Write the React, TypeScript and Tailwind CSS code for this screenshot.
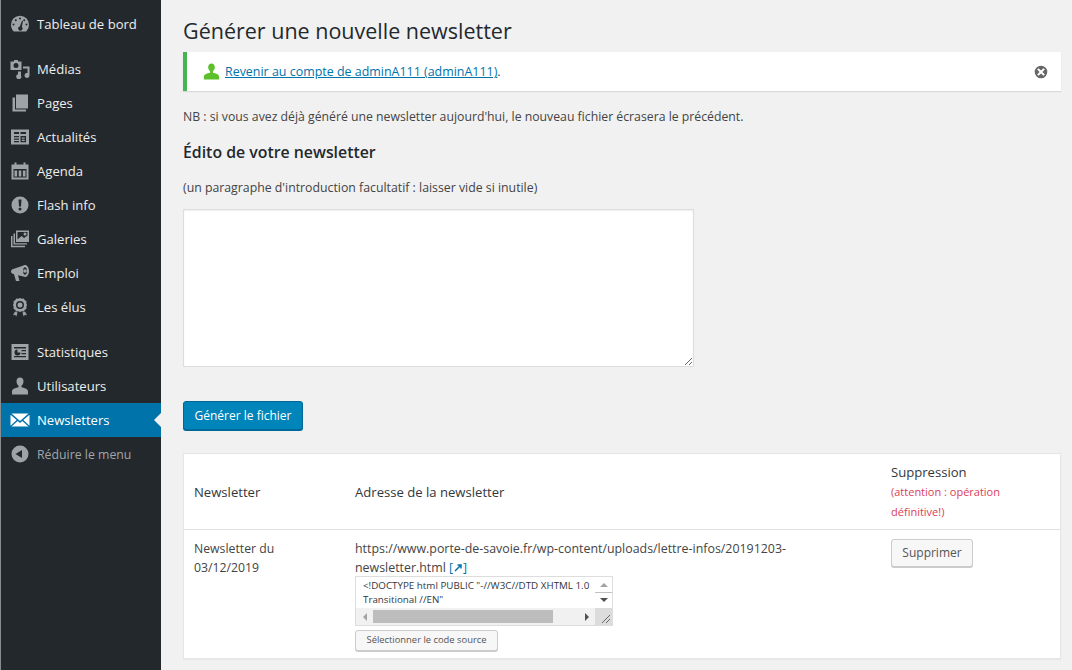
import { ReactNode } from "react";

const ic = "w-5 h-5 fill-current";

const userPath =
  "M10 1.500c2.200 0 3.500 1.700 3.500 3.900 0 1.900-.9 3.300-2 4.200v1.600c2.600.6 6.500 1.500 6.500 4.200V18.500H2v-3.100c0-2.700 3.900-3.600 6.500-4.200V9.600c-1.100-.9-2-2.300-2-4.200 0-2.200 1.300-3.900 3.500-3.900z";

const icons: Record<string, ReactNode> = {
  dashboard: (
    <svg viewBox="0 0 20 20" className={ic}>
      <path d="M3.800 17.500h12.400A8.900 8.900 0 0 0 19 10.700a9 9 0 0 0-18 0c0 2.700 1.100 5.100 2.800 6.800zM10 3.500a1 1 0 1 1 0 2 1 1 0 0 1 0-2zM5.800 5.200a1 1 0 1 1 0 2 1 1 0 0 1 0-2zm8.400 0a1 1 0 1 1 0 2 1 1 0 0 1 0-2zM3.500 9.500a1 1 0 1 1 0 2 1 1 0 0 1 0-2zm13 0a1 1 0 1 1 0 2 1 1 0 0 1 0-2zM13 7l-1.200 6a2.100 2.100 0 1 1-2-.5L12 6.700z" fillRule="evenodd" />
    </svg>
  ),
  media: (
    <svg viewBox="0 0 20 20" className={ic}>
      <path d="M4 1h4v1.500h3.500V11H.5V2.500H4V1zm2 3a2.500 2.500 0 1 0 0 5 2.500 2.500 0 0 0 0-5zM13 7.500h6.500v9a2.500 2.500 0 1 1-2-2.400V9.500H13v-2zM8 15.200V12.500h3v4a2.500 2.500 0 1 1-3-1.300z" fillRule="evenodd" />
    </svg>
  ),
  pages: (
    <svg viewBox="0 0 20 20" className={ic}>
      <path d="M6 1.500h12v14H6v-14zM2.500 4.500H5V16.500h11v2H2.500v-14z" />
    </svg>
  ),
  news: (
    <svg viewBox="0 0 20 20" className={ic}>
      <path d="M1 2.500h18v15H1v-15zM4 5v2h5V5H4zm6.500 0v2h5.500V5h-5.500zM4 9v1.300h5V9H4zm0 2.500v1.300h5v-1.300H4zm0 2.500v1.300h5V14H4zm6.500-5v6.300H16V9h-5.500zm1.200 1.500h3v1.200h-3v-1.200zm0 2.200h3v1.200h-3v-1.200z" fillRule="evenodd" />
    </svg>
  ),
  calendar: (
    <svg viewBox="0 0 20 20" className={ic}>
      <path d="M4.500 1.500h2v2h7v-2h2v2H18.500v15h-17v-15h3v-2zM3.500 8v8.500h13V8h-13zm1 1.500h2.600v6H4.500v-6zm4.200 0h2.600v6H8.700v-6zm4.200 0h2.600v6h-2.600v-6z" fillRule="evenodd" />
    </svg>
  ),
  warning: (
    <svg viewBox="0 0 20 20" className={ic}>
      <path d="M10 1.500a8.500 8.500 0 1 1 0 17 8.500 8.500 0 0 1 0-17zM8.500 4.500l.5 7h2l.5-7h-3zM10 12.500a1.500 1.500 0 1 0 0 3 1.500 1.500 0 0 0 0-3z" fillRule="evenodd" />
    </svg>
  ),
  gallery: (
    <svg viewBox="0 0 20 20" className={ic}>
      <path d="M6 1.500h13v11.500H6V1.500zm1.500 1.500v7.500l4-3.500 2.500 2 3.500-2.500V3h-10zM15 3.500a1.500 1.500 0 1 1 0 3 1.500 1.500 0 0 1 0-3zM3.500 4.500H5V14.200h12v1.400H3.500v-11.100zM1 7h1.500v9.700h12.500V18.200H1V7z" fillRule="evenodd" />
    </svg>
  ),
  megaphone: (
    <svg viewBox="0 0 20 20" className={ic}>
      <path d="M15 2c2.200 0 4 2.700 4 6s-1.800 6-4 6c-.5 0-1-.2-1.500-.4L8 12.200 9.500 18H6l-2-6.800C2.200 10.900 1 9.800 1 8.500c0-1.400 1.300-2.500 3-2.800l9.500-3.300C14 2.100 14.500 2 15 2zm0 2.200c-1.100 0-2 1.700-2 3.800s.9 3.800 2 3.800 2-1.700 2-3.800-.9-3.800-2-3.800zm0 2a1.800 1.800 0 1 1 0 3.600 1.800 1.800 0 0 1 0-3.600z" fillRule="evenodd" />
    </svg>
  ),
  award: (
    <svg viewBox="0 0 20 20" className={ic}>
      <path d="M10 1l1.800.8 2-.2 1 1.700 1.700 1-.2 2L17 8l-.7 1.800.2 2-1.700 1-1 1.700-2-.2L10 15l-1.800-.8-2 .2-1-1.700-1.700-1 .2-2L3 8l.7-1.700-.2-2 1.700-1 1-1.700 2 .2L10 1zm0 3a4 4 0 1 0 0 8 4 4 0 0 0 0-8zm0 1.500a2.500 2.500 0 1 1 0 5 2.500 2.500 0 0 1 0-5zM5 14.500l2.500 1-1.200 4-1.200-1.700-2.100.5L5 14.500zm10 0l2 3.800-2.100-.5-1.200 1.700-1.200-4 2.500-1z" fillRule="evenodd" />
    </svg>
  ),
  stats: (
    <svg viewBox="0 0 20 20" className={ic}>
      <path d="M1.500 2h17v16h-17V2zM4 5v1.500h12V5H4zm7.500 3v1.300H16V8h-4.500zm0 3v1.300H16V11h-4.500zM4 14v1.300h12V14H4zm3.500-6.500a3 3 0 1 0 3 3h-3v-3z" fillRule="evenodd" />
    </svg>
  ),
  user: (
    <svg viewBox="0 0 20 20" className={ic}>
      <path d={userPath} />
    </svg>
  ),
  mail: (
    <svg viewBox="0 0 20 20" className={ic}>
      <path d="M1.500 3.500h17L10 11 1.500 3.500zM.5 4.700 6.700 10 .5 15.800V4.700zm19 0v11.100L13.300 10l6.200-5.300zM7.700 10.900 10 13l2.300-2.100 6.200 5.600H1.500l6.200-5.600z" />
    </svg>
  ),
  collapse: (
    <svg viewBox="0 0 20 20" className={ic}>
      <path d="M10 1.500a8.500 8.500 0 1 1 0 17 8.500 8.500 0 0 1 0-17zm2 4.500-6.500 4 6.500 4V6z" fillRule="evenodd" />
    </svg>
  ),
};

function MenuItem({ icon, label, current, dim, mb }: { icon: string; label: string; current?: boolean; dim?: boolean; mb?: boolean }) {
  return (
    <div className={`relative flex h-[34px] items-center text-[13.100px] ${current ? "bg-[#0073aa] text-white" : dim ? "text-[#a0a5aa]" : "text-[#eeeeee]"} ${mb ? "mb-[11px]" : ""}`}>
      <span className={`ml-[9px] mr-[7px] flex w-5 justify-center ${current ? "text-white" : "text-[#9ea3a8]"}`}>{icons[icon]}</span>
      <span className={dim ? "pt-[2px] text-[12.300px]" : "pt-[2px]"}>{label}</span>
      {current && <span className="absolute right-0 top-[10px] h-0 w-0 border-y-[7px] border-r-[7px] border-y-transparent border-r-[#f1f1f1]" />}
    </div>
  );
}

function Sidebar() {
  return (
    <div className="h-full w-[161px] shrink-0 border-l border-[#8a8d90] bg-[#23282d] pt-[7px]">
      <MenuItem icon="dashboard" label="Tableau de bord" mb />
      <MenuItem icon="media" label="Médias" />
      <MenuItem icon="pages" label="Pages" />
      <MenuItem icon="news" label="Actualités" />
      <MenuItem icon="calendar" label="Agenda" />
      <MenuItem icon="warning" label="Flash info" />
      <MenuItem icon="gallery" label="Galeries" />
      <MenuItem icon="megaphone" label="Emploi" />
      <MenuItem icon="award" label="Les élus" mb />
      <MenuItem icon="stats" label="Statistiques" />
      <MenuItem icon="user" label="Utilisateurs" />
      <MenuItem icon="mail" label="Newsletters" current />
      <MenuItem icon="collapse" label="Réduire le menu" dim />
    </div>
  );
}

function CodeBox() {
  return (
    <div className="w-[258px] border border-[#dddddd] bg-white">
      <div className="flex h-[31px]">
        <div className="flex-1 overflow-hidden whitespace-nowrap pl-[7px] pt-[2px] text-[9.800px] leading-[14px] text-[#32373c]">
          {'<!DOCTYPE html PUBLIC "-//W3C//DTD XHTML 1.0'}
          <br />
          {'Transitional //EN"'}
        </div>
        <div className="flex w-[17px] flex-col items-center justify-around bg-white py-[4px]">
          <span className="h-0 w-0 border-x-[4px] border-b-[4px] border-x-transparent border-b-[#a3a3a3]" />
          <span className="h-px w-full bg-[#c1c1c1]" />
          <span className="h-0 w-0 border-x-[4px] border-t-[4px] border-x-transparent border-t-[#505050]" />
        </div>
      </div>
      <div className="flex h-[17px] items-center bg-[#f1f1f1]">
        <span className="ml-[7px] h-0 w-0 border-y-[4px] border-r-[4px] border-y-transparent border-r-[#a3a3a3]" />
        <span className="ml-[6px] h-[13px] w-[180px] bg-[#bdbdbd]" />
        <span className="ml-auto mr-[6px] h-0 w-0 border-y-[4px] border-l-[4px] border-y-transparent border-l-[#505050]" />
        <span className="h-[17px] w-[17px] bg-[#dcdcdc]">
          <svg viewBox="0 0 17 17" className="h-[17px] w-[17px] stroke-[#666666]">
            <path d="M7 15 15 7M11 15l4-4" fill="none" />
          </svg>
        </span>
      </div>
    </div>
  );
}

function WpButton({ children, className }: { children: ReactNode; className: string }) {
  return (
    <button className={`rounded-[3px] border border-[#cccccc] bg-[#f7f7f7] text-[#555555] shadow-[0_1px_0_#cccccc] ${className}`}>
      {children}
    </button>
  );
}

export default function App() {
  return (
    <div className="flex h-[670px] w-[1072px] overflow-hidden bg-[#f1f1f1] font-['Open_Sans','Noto_Sans',sans-serif] text-[12.250px] text-[#444444]">
      <Sidebar />
      <div className="flex-1 pl-[22px] pr-[11px]">
        <h1 className="mt-[15px] h-[37px] text-[21.500px] leading-[31px] text-[#23282d]">Générer une nouvelle newsletter</h1>
        <div className="flex h-[39px] items-center border-l-4 border-[#46b450] bg-white pl-[15px] pr-[13px] shadow-[0_1px_1px_rgba(0,0,0,0.1)]">
          <svg viewBox="0 0 20 20" className="mr-[4px] h-[19px] w-[19px] fill-[#5cc02c]">
            <path d={userPath} />
          </svg>
          <span className="pt-[2px] text-[12.450px]">
            <a className="text-[#0073aa] underline">Revenir au compte de adminA111 (adminA111)</a>.
          </span>
          <svg viewBox="0 0 20 20" className="ml-auto h-[14px] w-[14px] fill-[#666666]">
            <path d="M10 1a9 9 0 1 1 0 18 9 9 0 0 1 0-18zM6.500 4.500l-2 2L8 10l-3.500 3.500 2 2L10 12l3.500 3.500 2-2L12 10l3.500-3.500-2-2L10 8 6.500 4.500z" fillRule="evenodd" />
          </svg>
        </div>
        <p className="mt-[16px] h-[20px] leading-[20px]">NB : si vous avez déjà généré une newsletter aujourd'hui, le nouveau fichier écrasera le précédent.</p>
        <h2 className="mt-[13px] h-[24px] text-[15.850px] font-semibold leading-[24px] text-[#23282d]">Édito de votre newsletter</h2>
        <p className="mt-[14px] h-[20px] text-[12.300px] leading-[20px]">(un paragraphe d'introduction facultatif : laisser vide si inutile)</p>
        <textarea className="mt-[11px] block h-[158px] w-[511px] border border-[#dddddd] bg-white shadow-[inset_0_1px_2px_rgba(0,0,0,0.07)]" />
        <button className="mt-[34px] block h-[29px] w-[120px] rounded-[3px] border border-[#006799] bg-[#0085ba] text-[12px] text-white shadow-[0_1px_0_#006799]">Générer le fichier</button>
        <div className="mt-[23px] border border-[#e5e5e5] bg-white shadow-[0_1px_1px_rgba(0,0,0,0.04)]">
          <div className="grid h-[76px] grid-cols-[161px_536px_1fr] items-center border-b border-[#e1e1e1] pl-[10px] text-[13.100px] text-[#32373c]">
            <div className="pt-[2px]">Newsletter</div>
            <div className="pt-[2px]">Adresse de la newsletter</div>
            <div className="pt-[1px]">
              <div className="leading-[19px]">Suppression</div>
              <div className="w-[140px] text-[11px] leading-[20px] text-[#dc3c5a]">(attention : opération définitive!)</div>
            </div>
          </div>
          <div className="grid h-[128px] grid-cols-[161px_536px_1fr] pl-[10px] pt-[9px]">
            <div className="leading-[19px]">Newsletter du<br />03/12/2019</div>
            <div>
              <div className="h-[37px] text-[12.400px] leading-[19px]">
                <div>https://www.porte-de-savoie.fr/wp-content/uploads/lettre-infos/20191203-</div>
                <div className="flex items-center gap-[3px]">
                  <span>newsletter.html</span>
                  <span className="flex items-center text-[#0073aa]">
                    <span>[</span>
                    <svg viewBox="0 0 10 10" className="h-[10px] w-[10px] fill-none stroke-[#0073aa] stroke-[1.500]">
                      <path d="M2 8 8 2M4.500 2H8v3.500" />
                    </svg>
                    <span>]</span>
                  </span>
                </div>
              </div>
              <CodeBox />
              <WpButton className="mt-[4px] block h-[21px] w-[143px] text-[9.400px]">Sélectionner le code source</WpButton>
            </div>
            <div>
              <WpButton className="block h-[28px] w-[82px] text-[12px]">Supprimer</WpButton>
            </div>
          </div>
        </div>
      </div>
    </div>
  );
}
